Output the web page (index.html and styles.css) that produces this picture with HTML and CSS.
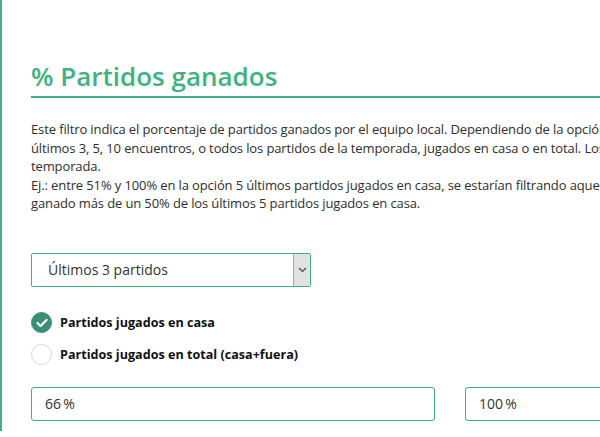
FILE: index.html
```html
<!DOCTYPE html>
<html lang="es">
<head>
<meta charset="utf-8">
<title>% Partidos ganados</title>
<link rel="stylesheet" href="styles.css">
</head>
<body>
<div class="panel">
  <div class="content">
    <h2 class="title">% Partidos ganados</h2>
    <p class="desc">Este filtro indica el porcentaje de partidos ganados por el equipo local. Dependiendo de la opción elegida, se tienen en cuenta los<br>últimos 3, 5, 10 encuentros, o todos los partidos de la temporada, jugados en casa o en total. Los datos corresponden a la<br>temporada.<br>Ej.: entre 51% y 100% en la opción 5 últimos partidos jugados en casa, se estarían filtrando aquellos equipos que han<br>ganado más de un 50% de los últimos 5 partidos jugados en casa.</p>
    <div class="select">
      <span class="select-text">Últimos 3 partidos</span>
      <span class="select-arrow"><svg width="9" height="6" viewBox="0 0 9 6"><path d="M1 1 L4.5 4.5 L8 1" fill="none" stroke="#444" stroke-width="1.2"/></svg></span>
    </div>
    <div class="radios">
      <label class="radio"><span class="dot checked"><svg width="12" height="10" viewBox="0 0 12 10"><path d="M1.5 5 L4.5 8 L10.5 2" fill="none" stroke="#fff" stroke-width="2.2" stroke-linecap="round" stroke-linejoin="round"/></svg></span>Partidos jugados en casa</label>
      <label class="radio"><span class="dot"></span>Partidos jugados en total (casa+fuera)</label>
    </div>
    <div class="range">
      <div class="field">66&#8201;%</div>
      <div class="field">100&#8201;%</div>
    </div>
  </div>
</div>
</body>
</html>
```
FILE: styles.css
```css
html, body {
  margin: 0;
  padding: 0;
  overflow: hidden;
  background: #fff;
}
body {
  font-family: "Open Sans", "Noto Sans", sans-serif;
  color: #333;
}
.panel {
  border-left: 2px solid #3fb37f;
  padding: 58px 0 10px 29px;
  width: 900px;
}
.content {
  width: 838px;
}
.title {
  margin: 0;
  font-size: 26px;
  font-weight: 600;
  color: #3fb37f;
  line-height: 36px;
  padding-bottom: 2px;
  border-bottom: 2px solid #3fb37f;
}
.desc {
  margin: 22px 0 0;
  white-space: nowrap;
  font-size: 13px;
  letter-spacing: -0.12px;
  line-height: 18.5px;
  color: #2e2e2e;
}
.select {
  margin-top: 40px;
  width: 278px;
  height: 32px;
  border: 1px solid #3fb37f;
  border-radius: 2px;
  display: flex;
  align-items: center;
  justify-content: space-between;
}
.select-text {
  padding-left: 16px;
  font-size: 14px;
  color: #333;
}
.select-arrow {
  width: 16px;
  height: 32px;
  background: #e1e1e1;
  border-left: 1px solid #a8a8a8;
  display: flex;
  align-items: center;
  justify-content: center;
}
.radios {
  margin-top: 25px;
  display: flex;
  flex-direction: column;
  gap: 10px;
}
.radio {
  display: flex;
  align-items: center;
  gap: 8px;
  font-size: 12.6px;
  font-weight: 700;
  color: #111;
  height: 22px;
}
.dot {
  width: 21px;
  height: 21px;
  box-sizing: border-box;
  border-radius: 50%;
  border: 1px solid #d8d8d8;
  display: flex;
  align-items: center;
  justify-content: center;
}
.dot.checked {
  background: #388e76;
  border-color: #388e76;
}
.range {
  margin-top: 21px;
  display: grid;
  grid-template-columns: 404px 404px;
  gap: 30px;
}
.field {
  height: 32px;
  border: 1px solid #3fb37f;
  border-radius: 3px;
  display: flex;
  align-items: center;
  padding-left: 13px;
  font-size: 14px;
  color: #333;
}
```
